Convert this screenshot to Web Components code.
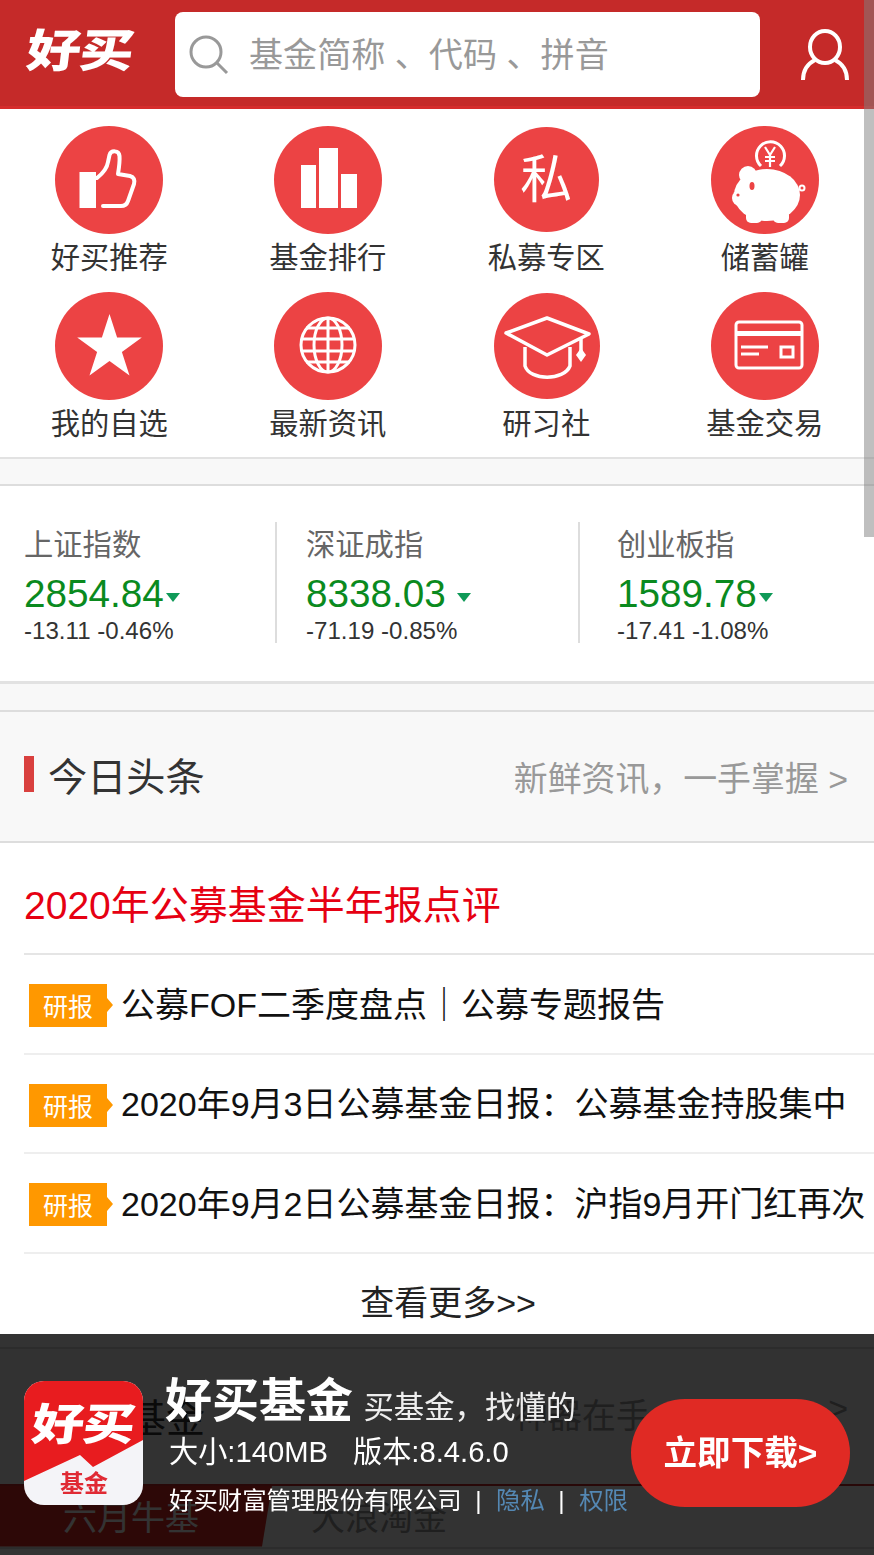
<!DOCTYPE html>
<html lang="zh">
<head>
<meta charset="utf-8">
<title>好买基金</title>
<style>
  html, body { margin: 0; height: 1555px; overflow: hidden; background: #fff; }
  body { font-family: "Liberation Sans", "Noto Sans CJK SC", sans-serif; color: #333; }
  hb-nav-item svg { display: block; width: 100%; height: 100%; }
</style>
</head>
<body>
<hb-header></hb-header>
<hb-nav>
  <hb-nav-item>
    <svg slot="icon" viewBox="0 0 108 108"><rect x="24.500" y="46" width="16.500" height="36" fill="#fff"/><path d="M42 52C47 48 52 43 53 36L54.500 29C56 24 64 24 64.500 30 65 36 64 42 63 48L75 50C79 51 80 54 79 58L73 75C72 78 70 80 66 80L48 80" fill="none" stroke="#fff" stroke-width="4" stroke-linecap="round" stroke-linejoin="round"/></svg>
    好买推荐
  </hb-nav-item>
  <hb-nav-item>
    <svg slot="icon" viewBox="0 0 108 108"><path d="M27 39h15v43H27zM45 22h19v60H45zM67 48h16v34H67z" fill="#fff"/></svg>
    基金排行
  </hb-nav-item>
  <hb-nav-item size="105" glyph="私">私募专区</hb-nav-item>
  <hb-nav-item>
    <svg slot="icon" viewBox="0 0 108 108"><path d="M50 40A14 14 0 1 1 69 40" fill="none" stroke="#fff" stroke-width="3"/><path d="M54 21l5 8 5-8M59 29v12M54 31h10M54 35h10" fill="none" stroke="#fff" stroke-width="2.200"/><ellipse cx="56" cy="69" rx="33" ry="26" fill="#fff"/><circle cx="37" cy="49" r="9" fill="#fff"/><ellipse cx="29" cy="72" rx="8" ry="8" fill="#fff"/><rect x="35" y="84" width="16" height="13" rx="5" fill="#fff"/><rect x="62" y="84" width="16" height="13" rx="5" fill="#fff"/><ellipse cx="41" cy="60" rx="2.500" ry="4" fill="#ec4344"/><circle cx="27" cy="69" r="1.600" fill="#ec4344"/><circle cx="91" cy="62" r="2.500" fill="none" stroke="#fff" stroke-width="2"/></svg>
    储蓄罐
  </hb-nav-item>
  <hb-nav-item>
    <svg slot="icon" viewBox="0 0 108 108"><path d="M54.500 22L62.100 45.500 86.800 45.500 66.900 60 74.500 83.500 54.500 69 34.500 83.500 42.100 60 22.200 45.500 46.900 45.500Z" fill="#fff"/></svg>
    我的自选
  </hb-nav-item>
  <hb-nav-item>
    <svg slot="icon" viewBox="0 0 108 108"><g fill="none" stroke="#fff" stroke-width="3"><circle cx="54" cy="53" r="27"/><ellipse cx="54" cy="53" rx="14" ry="27"/><path d="M54 26v54M32 36h44M27.500 47h53M27.500 59h53M32 70h44"/></g></svg>
    最新资讯
  </hb-nav-item>
  <hb-nav-item size="106">
    <svg slot="icon" viewBox="0 0 106 106"><g fill="none" stroke="#fff" stroke-width="3.500" stroke-linejoin="round"><path d="M12 40L53 25 95 41 53 62Z"/><path d="M31 54V73C36 88 70 88 76 73V54"/><path d="M87 44V58"/></g><path d="M87 55l5 7-5 7-5-7z" fill="#fff"/></svg>
    研习社
  </hb-nav-item>
  <hb-nav-item>
    <svg slot="icon" viewBox="0 0 108 108"><rect x="25" y="30" width="66" height="46" rx="3" fill="none" stroke="#fff" stroke-width="3"/><path d="M25 39h66v5H25z" fill="#fff"/><path d="M30 55h27M30 62h18" stroke="#fff" stroke-width="3"/><rect x="70" y="55" width="12" height="10" fill="none" stroke="#fff" stroke-width="3"/></svg>
    基金交易
  </hb-nav-item>
</hb-nav>
<hb-gap></hb-gap>
<hb-index-bar>
  <hb-index name="上证指数" value="2854.84" change="-13.11 -0.46%"></hb-index>
  <hb-index name="深证成指" value="8338.03" change="-71.19 -0.85%" pad="29" arrow-gap="11"></hb-index>
  <hb-index name="创业板指" value="1589.78" change="-17.41 -1.08%" pad="37"></hb-index>
</hb-index-bar>
<hb-gap thick></hb-gap>
<hb-section-title>今日头条<span slot="more">新鲜资讯，一手掌握 &gt;</span></hb-section-title>
<hb-headline>2020年公募基金半年报点评</hb-headline>
<hb-news-row>公募FOF二季度盘点｜公募专题报告</hb-news-row>
<hb-news-row>2020年9月3日公募基金日报：公募基金持股集中</hb-news-row>
<hb-news-row>2020年9月2日公募基金日报：沪指9月开门红再次</hb-news-row>
<hb-more>查看更多&gt;&gt;</hb-more>
<hb-under-section></hb-under-section>
<hb-app-banner></hb-app-banner>
<hb-scroll-thumb></hb-scroll-thumb>

<script>
const define = (name, html) => {
  const template = document.createElement('template')
  template.innerHTML = html
  customElements.define(name, class extends HTMLElement {
    constructor() {
      super()
      this.attachShadow({ mode: 'open' })
        .appendChild(template.content.cloneNode(true))
    }
  })
}

define('hb-header', `
<style>
  :host { display: flex; align-items: flex-start; height: 106px; background: #c52a29; border-bottom: 3px solid #d62c2c; }
  .logo { width: 175px; box-sizing: border-box; padding: 15px 0 0 27px; color: #fff; font-size: 54px; line-height: 72px; font-weight: 900; letter-spacing: -1px; }
  .logo span { display: inline-block; transform: skewX(-7deg) scaleY(.84); }
  .search { width: 585px; height: 85px; margin-top: 12px; background: #fff; border-radius: 8px; display: flex; align-items: center; }
  .search svg { width: 40px; height: 40px; margin: 0 0 0 14px; flex: none; }
  .search span { margin-left: 20px; margin-top: -5px; font-size: 34.100px; color: #999; }
  .user { width: 50px; height: 54px; margin: 28px 0 0 40px; }
</style>
<div class="logo"><span>好买</span></div>
<div class="search">
  <svg viewBox="0 0 40 40"><circle cx="17" cy="17" r="15" fill="none" stroke="#999" stroke-width="3"/><path d="M27 27L38 38" stroke="#999" stroke-width="3"/></svg>
  <span>基金简称 、代码 、拼音</span>
</div>
<svg class="user" viewBox="0 0 50 54" fill="none" stroke="#fff" stroke-width="4"><ellipse cx="25" cy="19" rx="15" ry="16"/><path d="M15 32C7 36 3 42 3 52M35 32C43 36 47 42 47 52"/></svg>
`)

define('hb-nav', `
<style>
  :host { display: grid; grid-template-columns: repeat(4, 1fr); row-gap: 12px; padding: 17px 0 11px; }
</style>
<slot></slot>
`)

customElements.define('hb-nav-item', class extends HTMLElement {
  constructor() {
    super()
    const size = Number(this.getAttribute('size')) || 108
    const glyph = this.getAttribute('glyph')
    const small = size < 108
    this.attachShadow({ mode: 'open' }).innerHTML = `
<style>
  :host { display: flex; flex-direction: column; align-items: center; font-size: 29.300px; color: #333; }
  .circle { width: ${size}px; height: ${size}px; border-radius: 50%; background: #ec4344; margin: ${small ? 1 : 0}px 0 ${small ? 107 - size : 0}px ${size === 106 ? 2 : 0}px; color: #fff; display: flex; align-items: center; justify-content: center; font-size: 52px; line-height: 1; }
  .label { height: 46px; line-height: 48px; white-space: nowrap; }
</style>
<div class="circle"><slot name="icon">${glyph || ''}</slot></div>
<div class="label"><slot></slot></div>`
  }
})

customElements.define('hb-gap', class extends HTMLElement {
  constructor() {
    super()
    const top = this.hasAttribute('thick') ? 3 : 2
    const height = this.hasAttribute('thick') ? 26 : 25
    this.attachShadow({ mode: 'open' }).innerHTML = `
<style>
  :host { display: block; height: ${height}px; background: #f8f8f8; border-top: ${top}px solid #e2e2e2; border-bottom: 2px solid #ddd; }
</style>`
  }
})

define('hb-index-bar', `
<style>
  :host { display: grid; grid-template-columns: 253px 303px 1fr; padding: 36px 0 38px 24px; }
</style>
<slot></slot>
`)

customElements.define('hb-index', class extends HTMLElement {
  constructor() {
    super()
    const pad = this.getAttribute('pad') || 0
    const gap = this.getAttribute('arrow-gap') || 2
    this.attachShadow({ mode: 'open' }).innerHTML = `
<style>
  :host { display: block; height: 121px; padding-left: ${pad}px; border-right: 2px solid #ddd; }
  :host(:last-child) { border-right: 0; }
  .name { height: 44px; line-height: 46px; font-size: 29.300px; color: #666; }
  .value { height: 56px; line-height: 56px; font-size: 38.700px; color: #0a8a1e; display: flex; align-items: center; }
  .arrow { width: 0; height: 0; margin: 6px 0 0 ${gap}px; border: 7.500px solid transparent; border-top: 9px solid #0f9a58; border-bottom: 0; }
  .change { height: 21px; line-height: 17px; font-size: 24.100px; color: #333; white-space: nowrap; }
</style>
<div class="name">${this.getAttribute('name')}</div>
<div class="value">${this.getAttribute('value')}<span class="arrow"></span></div>
<div class="change">${this.getAttribute('change')}</div>`
  }
})

define('hb-section-title', `
<style>
  :host { display: flex; align-items: center; height: 123px; padding: 0 26px 6px 24px; background: #f8f8f8; border-bottom: 2px solid #ddd; }
  .bar { width: 10px; height: 36px; background: #d9403e; margin-right: 15px; }
  .title { font-size: 39.200px; color: #333; margin-left: -1px; }
  .more { margin-left: auto; margin-top: 6px; font-size: 33.900px; color: #999; }
</style>
<span class="bar"></span>
<span class="title"><slot></slot></span>
<span class="more"><slot name="more"></slot></span>
`)

define('hb-headline', `
<style>
  :host { display: flex; align-items: center; height: 102px; padding-top: 8px; margin-left: 24px; font-size: 39px; color: #e60012; border-bottom: 2px solid #e5e5e5; }
</style>
<slot></slot>
`)

define('hb-news-row', `
<style>
  :host { display: flex; align-items: center; height: 97.500px; margin-left: 24px; border-bottom: 2px solid #eee; font-size: 34px; color: #111; white-space: nowrap; overflow: hidden; }
  .tag { position: relative; flex: none; width: 78px; height: 43px; line-height: 47px; margin: 4px 14px 0 5px; background: #ff9800; color: #fff; font-size: 25px; text-align: center; }
  .tag::after { content: ""; position: absolute; left: 100%; top: 14px; border-left: 6px solid #ff9800; border-top: 7px solid transparent; border-bottom: 7px solid transparent; }
  .text { margin-top: -3.500px; }
</style>
<span class="tag">研报</span>
<span class="text"><slot></slot></span>
`)

define('hb-more', `
<style>
  :host { display: block; height: 93px; padding-left: 22px; text-align: center; font-size: 34px; line-height: 99px; color: #222; border-bottom: 2px solid #ddd; }
</style>
<slot></slot>
`)

define('hb-under-section', `
<style>
  :host { display: block; }
  .head { display: flex; align-items: center; height: 135px; padding: 0 26px 0 127px; background: #f8f8f8; }
  .title { font-size: 39px; color: #333; margin-top: -2px; }
  .more { margin-left: auto; width: 334px; display: flex; justify-content: space-between; font-size: 34px; color: #999; margin-top: -5px; }
  .tabs { display: flex; height: 61px; border-top: 2px solid #c52a29; border-bottom: 2px solid #ddd; font-size: 34px; line-height: 64px; color: #999; }
  .tab { width: 272px; padding-left: 63px; box-sizing: border-box; }
  .active { background: #e02a24; color: #fff; clip-path: polygon(0 0, 100% 0, 262px 100%, 0 100%); }
  .next { padding-left: 39px; }
</style>
<div class="head"><span class="title">基金</span><span class="more"><span>神器在手</span><span>&gt;</span></span></div>
<div class="tabs"><div class="tab active">六月牛基</div><div class="tab next">大浪淘金</div></div>
`)

define('hb-app-banner', `
<style>
  :host { position: fixed; left: 0; right: 0; bottom: 0; height: 221px; background: rgba(0, 0, 0, .8); color: #fff; display: flex; align-items: flex-start; }
  .app { position: relative; flex: none; width: 119px; height: 124px; margin: 47px 22px 0 24px; border-radius: 20px; overflow: hidden; background: #f4f4f8; }
  .app svg { display: block; width: 100%; height: 100%; }
  .app b { position: absolute; left: 8px; top: 12px; font-size: 52px; line-height: 64px; font-weight: 900; color: #fff; transform: skewX(-7deg) scaleY(.84); letter-spacing: -1px; white-space: nowrap; }
  .app i { position: absolute; left: 36px; top: 88px; font-size: 24px; line-height: 30px; font-style: normal; font-weight: 700; color: #e02a34; white-space: nowrap; }
  .info { flex: none; width: 462px; padding-top: 42px; }
  .title { height: 50px; line-height: 50px; font-size: 47px; font-weight: 700; white-space: nowrap; }
  .title small { position: relative; top: 1px; font-size: 30.400px; font-weight: 400; color: #eee; margin-left: 2px; }
  .meta { margin: 4px 0 0 4px; height: 44px; line-height: 44px; font-size: 29.200px; white-space: nowrap; }
  .meta span { margin-left: 25px; }
  .legal { margin: 10px 0 0 4px; height: 34px; line-height: 34px; font-size: 24.400px; white-space: nowrap; }
  .legal em { font-style: normal; margin: 0 14.500px 0 13.500px; }
  .legal a { color: #5488b4; }
  .btn { flex: none; width: 219px; height: 108px; margin-top: 65px; margin-left: 4px; border-radius: 54px; background: #e02a24; text-align: center; line-height: 110px; font-size: 33.600px; font-weight: 700; white-space: nowrap; }
</style>
<div class="app">
  <svg viewBox="0 0 119 124"><path d="M0 0H119V59L69 86 56 74 0 100Z" fill="#e81c1f"/></svg>
  <b>好买</b><i>基金</i>
</div>
<div class="info">
  <div class="title">好买基金<small> 买基金，找懂的</small></div>
  <div class="meta">大小:140MB<span>版本:8.4.6.0</span></div>
  <div class="legal">好买财富管理股份有限公司<em>|</em><a>隐私</a><em>|</em><a>权限</a></div>
</div>
<div class="btn">立即下载&gt;</div>
`)

define('hb-scroll-thumb', `
<style>
  :host { position: fixed; top: 0; right: 0; width: 10px; height: 537px; background: rgba(128, 128, 128, .5); }
</style>
`)
</script>
</body>
</html>
